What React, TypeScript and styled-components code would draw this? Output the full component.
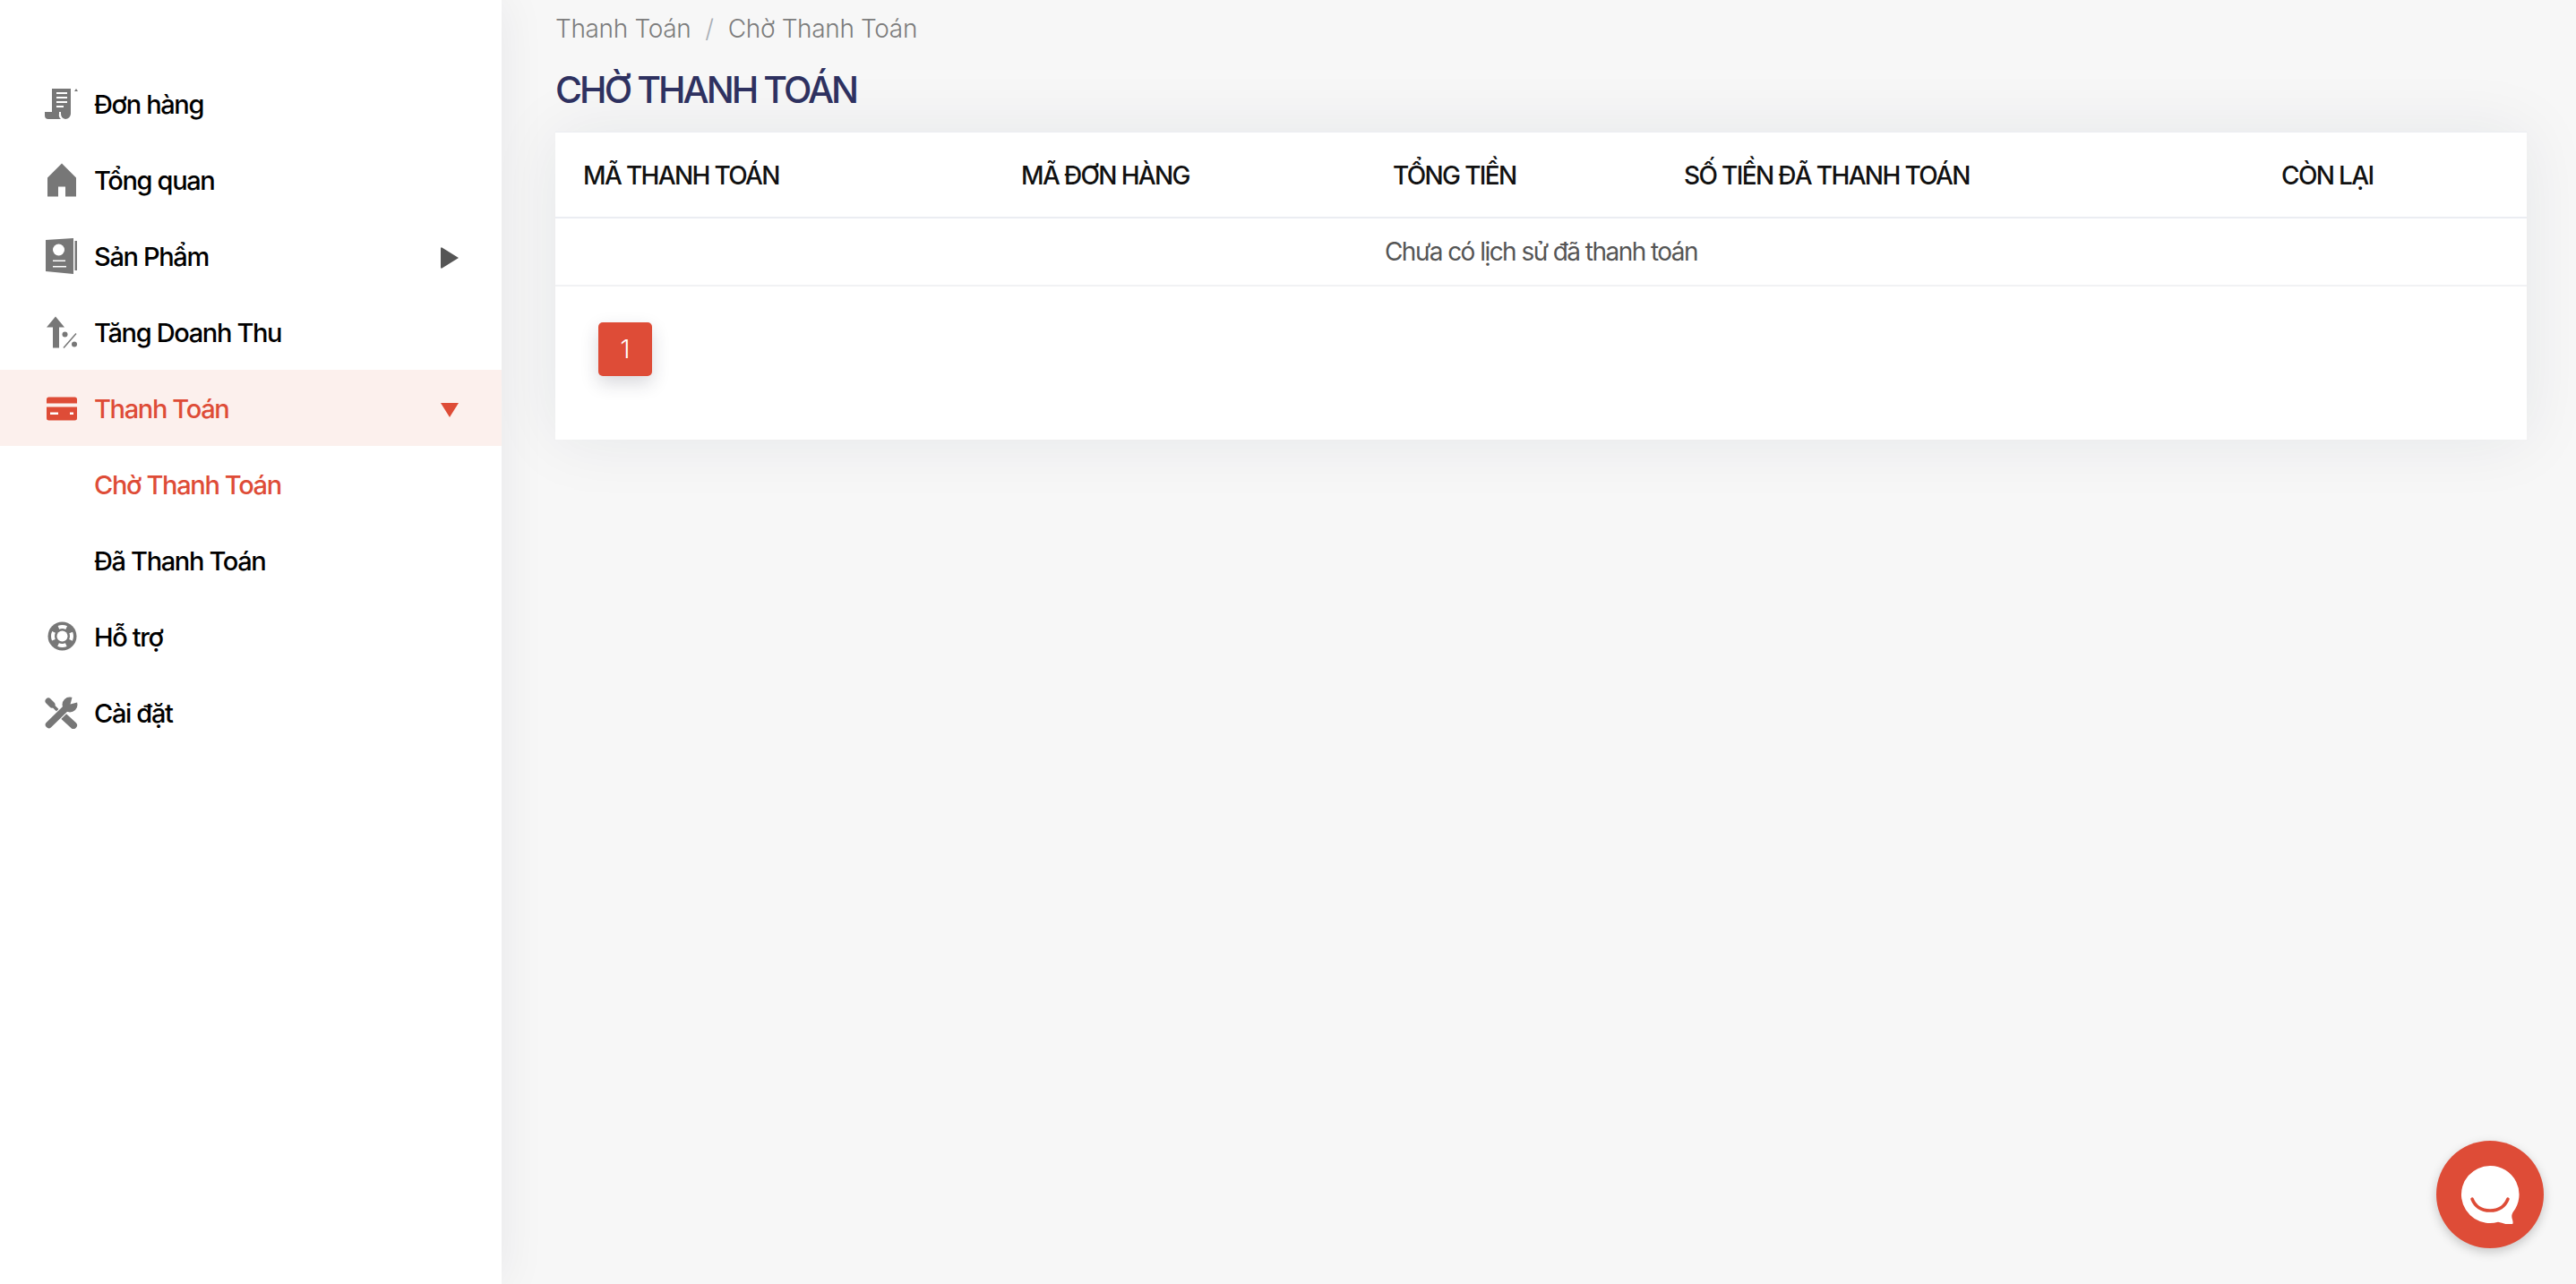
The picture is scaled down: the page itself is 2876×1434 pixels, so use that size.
import React from 'react'
import styled, { createGlobalStyle } from 'styled-components'

const GlobalStyle = createGlobalStyle`
  html, body {
    margin: 0;
    padding: 0;
    background: #f7f7f7;
    font-family: 'Inter', 'Noto Sans', sans-serif;
  }
  * { box-sizing: border-box; }
`

const Layout = styled.div`
  display: flex;
  width: 100%;
  height: 100vh;
  overflow: hidden;
`

const Sidebar = styled.aside`
  position: relative;
  z-index: 1;
  flex: 0 0 560px;
  padding-top: 73px;
  background: #ffffff;
  box-shadow: 0 0 50px rgba(20, 30, 50, 0.07);
`

const MenuRow = styled.div<{ $active?: boolean; $current?: boolean }>`
  display: flex;
  align-items: center;
  height: 85px;
  padding: 0 48px 0 50px;
  background: ${(p) => (p.$active ? '#fcf0ed' : 'transparent')};
  color: ${(p) => (p.$active || p.$current ? '#de4c37' : '#000000')};
`

const IconBox = styled.span<{ $active?: boolean }>`
  display: flex;
  flex: 0 0 38px;
  align-items: center;
  justify-content: center;
  margin-right: 17px;
  color: ${(p) => (p.$active ? '#de4c37' : '#777777')};
`

const MenuLabel = styled.span<{ $nested?: boolean }>`
  flex: 1;
  margin-left: ${(p) => (p.$nested ? '55px' : '0')};
  padding-top: 1px;
  font-size: 29px;
  font-weight: 500;
  line-height: 1;
  letter-spacing: -1.35px;
  white-space: nowrap;
`

const Caret = styled.svg<{ $active?: boolean }>`
  display: block;
  width: 20px;
  height: 24px;
  margin-top: 4px;
  fill: ${(p) => (p.$active ? '#de4c37' : '#555555')};
`

const Main = styled.main`
  flex: 1;
  min-width: 0;
  padding: 0 55px 0 60px;
`

const Breadcrumb = styled.nav`
  display: flex;
  align-items: center;
  gap: 16px;
  height: 64px;
  color: #7d7d7d;
  font-size: 28px;
  font-weight: 300;
  letter-spacing: -0.35px;
`

const Divider = styled.span`
  color: #a9aeb5;
`

const Title = styled.h1`
  margin: 0;
  height: 84px;
  padding-top: 11px;
  color: #2e3160;
  font-size: 41px;
  font-weight: 500;
  line-height: 50px;
  letter-spacing: -2.95px;
  white-space: nowrap;
`

const Card = styled.section`
  height: 343px;
  background: #ffffff;
  box-shadow: 0 -1px 0 #ebedf2, 0 0 70px rgba(30, 40, 70, 0.08);
`

const Table = styled.table`
  width: 100%;
  border-collapse: collapse;
  table-layout: fixed;
`

const HeadCell = styled.th<{ $width?: number }>`
  width: ${(p) => (p.$width ? `${p.$width}px` : 'auto')};
  height: 95px;
  padding: 2px 0 0 31px;
  border-bottom: 2px solid #ebedf2;
  color: #111111;
  font-size: 28px;
  font-weight: 500;
  letter-spacing: -1.65px;
  text-align: left;
  white-space: nowrap;
`

const EmptyCell = styled.td`
  height: 76px;
  padding: 0;
  border-bottom: 2px solid #f1f2f4;
  color: #555555;
  font-size: 28px;
  font-weight: 400;
  letter-spacing: -1.55px;
  text-align: center;
`

const Pagination = styled.div`
  display: flex;
  padding: 40px 0 0 48px;
`

const PageButton = styled.button`
  width: 60px;
  height: 60px;
  padding: 0;
  border: 0;
  border-radius: 5px;
  background: #de4c37;
  box-shadow: 0 8px 20px rgba(40, 40, 60, 0.18);
  color: #ffffff;
  font-family: inherit;
  font-size: 28px;
  font-weight: 300;
`

const ChatButton = styled.button`
  position: fixed;
  right: 36px;
  bottom: 40px;
  z-index: 2;
  display: flex;
  align-items: center;
  justify-content: center;
  width: 120px;
  height: 120px;
  padding: 0;
  border: 0;
  border-radius: 50%;
  background: #de4c37;
  box-shadow: 0 4px 12px rgba(0, 0, 0, 0.2);
`

const ReceiptIcon = () => (
  <svg width="38" height="38" viewBox="0 0 38 38" fill="currentColor">
    <path d="M8 2h21v28a6 6 0 0 1-6 6 6 6 0 0 1-5-6v-2H8z" />
    <path d="M0 28h16v2a6 6 0 0 0 2 6H4a4 4 0 0 1-4-4z" />
    <path d="M13 6h12v2H13zM13 11h12v2H13zM13 16h12v2H13zM13 21h8v2h-8z" fill="#fff" />
    <path d="M33 5l2-3 2 3z" />
  </svg>
)

const HomeIcon = () => (
  <svg width="36" height="38" viewBox="0 0 36 38" fill="currentColor">
    <path d="M18 .5L34 16.500V37.500H22V26.500H14V37.500H2V16.500z" />
  </svg>
)

const BookIcon = () => (
  <svg width="38" height="42" viewBox="0 0 38 42" fill="currentColor">
    <path d="M1 3L32 1V41L1 38z" />
    <path d="M33.500 4H36V37H33.500z" />
    <circle cx="15.500" cy="14" r="6.500" fill="#fff" />
    <path d="M9 25.500H23V27H9zM9 32H24V33.500H9z" fill="#fff" />
  </svg>
)

const GrowthIcon = () => (
  <svg width="38" height="38" viewBox="0 0 38 38" fill="currentColor">
    <path d="M12 1.500L22 13.500H16V36.500H9V13.500H2z" />
    <circle cx="22.500" cy="21.500" r="3" />
    <circle cx="33" cy="32.500" r="3" />
    <path d="M21 36.500L35 20.500" stroke="currentColor" strokeWidth="1.500" />
  </svg>
)

const CardIcon = () => (
  <svg width="38" height="28" viewBox="0 0 38 28" fill="currentColor">
    <path d="M4.500 1.500h29a2.500 2.500 0 0 1 2.500 2.500v4.500H2V4a2.500 2.500 0 0 1 2.500-2.500zM2 12.500h34V25a2.500 2.500 0 0 1-2.500 2.500h-29A2.500 2.500 0 0 1 2 25z" />
    <path d="M6 18.500h9V21H6zM28 18.500h4V21h-4z" fill="#fff" />
  </svg>
)

const LifeRingIcon = () => (
  <svg width="33" height="33" viewBox="0 0 33 33" fill="currentColor">
    <circle cx="16.500" cy="16.500" r="16" />
    <circle
      cx="16.500"
      cy="16.500"
      r="10.500"
      fill="none"
      stroke="#fff"
      strokeWidth="4"
      strokeDasharray="9 7.490"
      strokeDashoffset="4.500"
    />
    <circle cx="16.500" cy="16.500" r="6" fill="#fff" />
  </svg>
)

const ToolsIcon = () => (
  <svg width="38" height="36" viewBox="0 0 38 36" fill="none" stroke="currentColor" strokeLinecap="round">
    <path d="M4 5l4 4" strokeWidth="7" />
    <path d="M8 9l8 8" strokeWidth="3.500" />
    <path d="M20 21l12 11" strokeWidth="8" />
    <path d="M4.500 31.500L24 12.500" stroke="#fff" strokeWidth="10" strokeLinecap="butt" />
    <path d="M4.500 31.500L24 12.500" strokeWidth="7.500" />
    <circle cx="28" cy="9" r="8.500" fill="currentColor" stroke="none" />
    <path d="M28.500 8.500L31 -1H38V6z" fill="#fff" stroke="none" />
  </svg>
)

const ChatIcon = () => (
  <svg width="66" height="66" viewBox="0 0 66 66">
    <path
      d="M33 1a32 32 0 1 0 9 62.700c5 1 10 3.300 14 3.300 3 0 3-3 2-6-1-3-1-5 .500-8A32 32 0 0 0 33 1z"
      fill="#fff"
    />
    <path
      d="M13 38c4 10 12 13 20 13s16-3 20-13"
      fill="none"
      stroke="#de4c37"
      strokeWidth="3.500"
      strokeLinecap="round"
    />
  </svg>
)

const RightCaret = () => (
  <Caret viewBox="0 0 20 24">
    <path d="M0 1.500a1 1 0 0 1 1.500-1L20 12 1.500 23.500a1 1 0 0 1-1.500-1z" />
  </Caret>
)

const DownCaret = () => (
  <Caret $active viewBox="0 0 20 24">
    <path d="M0 4h20L10 20z" />
  </Caret>
)

const columns = [
  { label: 'MÃ THANH TOÁN', width: 489 },
  { label: 'MÃ ĐƠN HÀNG', width: 415 },
  { label: 'TỔNG TIỀN', width: 325 },
  { label: 'SỐ TIỀN ĐÃ THANH TOÁN', width: 667 },
  { label: 'CÒN LẠI' },
]

const App = () => {
  return (
    <>
      <GlobalStyle />
      <Layout>
        <Sidebar>
          <MenuRow>
            <IconBox><ReceiptIcon /></IconBox>
            <MenuLabel>Đơn hàng</MenuLabel>
          </MenuRow>
          <MenuRow>
            <IconBox><HomeIcon /></IconBox>
            <MenuLabel>Tổng quan</MenuLabel>
          </MenuRow>
          <MenuRow>
            <IconBox><BookIcon /></IconBox>
            <MenuLabel>Sản Phẩm</MenuLabel>
            <RightCaret />
          </MenuRow>
          <MenuRow>
            <IconBox><GrowthIcon /></IconBox>
            <MenuLabel>Tăng Doanh Thu</MenuLabel>
          </MenuRow>
          <MenuRow $active>
            <IconBox $active><CardIcon /></IconBox>
            <MenuLabel>Thanh Toán</MenuLabel>
            <DownCaret />
          </MenuRow>
          <MenuRow $current>
            <MenuLabel $nested>Chờ Thanh Toán</MenuLabel>
          </MenuRow>
          <MenuRow>
            <MenuLabel $nested>Đã Thanh Toán</MenuLabel>
          </MenuRow>
          <MenuRow>
            <IconBox><LifeRingIcon /></IconBox>
            <MenuLabel>Hỗ trợ</MenuLabel>
          </MenuRow>
          <MenuRow>
            <IconBox><ToolsIcon /></IconBox>
            <MenuLabel>Cài đặt</MenuLabel>
          </MenuRow>
        </Sidebar>
        <Main>
          <Breadcrumb>
            <span>Thanh Toán</span>
            <Divider>/</Divider>
            <span>Chờ Thanh Toán</span>
          </Breadcrumb>
          <Title>CHỜ THANH TOÁN</Title>
          <Card>
            <Table>
              <thead>
                <tr>
                  {columns.map((col) => (
                    <HeadCell key={col.label} $width={col.width}>{col.label}</HeadCell>
                  ))}
                </tr>
              </thead>
              <tbody>
                <tr>
                  <EmptyCell colSpan={5}>Chưa có lịch sử đã thanh toán</EmptyCell>
                </tr>
              </tbody>
            </Table>
            <Pagination>
              <PageButton>1</PageButton>
            </Pagination>
          </Card>
        </Main>
      </Layout>
      <ChatButton aria-label="chat">
        <ChatIcon />
      </ChatButton>
    </>
  )
}

export default App
